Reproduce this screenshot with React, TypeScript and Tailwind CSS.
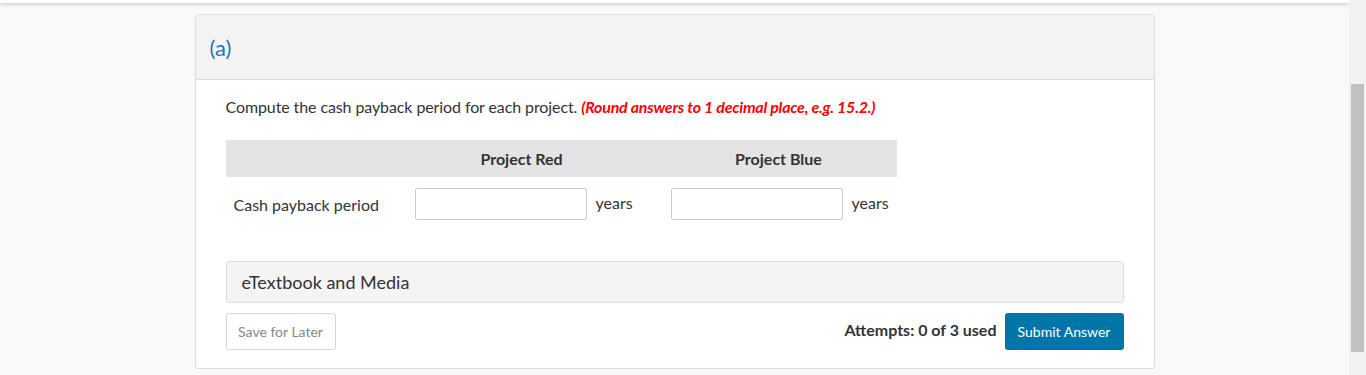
export default function App() {
    return (
        <div className="flex h-[375px] w-full overflow-hidden bg-[#f9f9f9] font-['Lato',sans-serif] text-[#333]">
            <div className="flex flex-1 flex-col">
                <div className="h-[3px] w-full bg-white shadow-[0_1px_4px_rgba(0,0,0,0.25)]"></div>
                <div className="mx-auto mt-[11px] w-[960px] rounded-[3px] border border-[#dcdcdc] bg-white">
                    <div className="flex h-[65px] items-center border-b border-[#dcdcdc] bg-[#f4f4f4] pl-[14px]">
                        <span className="mt-[1px] text-[22px] text-[#1f78b4]">(a)</span>
                    </div>

                    <div className="px-[30px] pb-[18px] pt-[17px]">
                        <p className="text-[16px] leading-[20px] tracking-[-0.1px]">
                            Compute the cash payback period for each project.{" "}
                            <span className="font-bold italic text-[#ff0000] tracking-[-0.25px]">
                                (Round answers to 1 decimal place, e.g. 15.2.)
                            </span>
                        </p>

                        <div className="mt-[23px] w-[671px]">
                            <div className="flex h-[37px] items-center bg-[#e4e4e4] text-[16px] font-bold">
                                <div className="w-[189px]"></div>
                                <div className="w-[214px] text-center">Project Red</div>
                                <div className="w-[42px]"></div>
                                <div className="w-[216px] text-center">Project Blue</div>
                            </div>
                            <div className="mt-[11px] flex items-center text-[16px]">
                                <div className="w-[189px] pl-[8px] pt-[2px]">Cash payback period</div>
                                <div className="flex w-[219px] items-center gap-[9px]">
                                    <input className="h-[32px] w-[172px] rounded-[2px] border border-[#cccccc] bg-white outline-none" />
                                    <span className="-mt-[2px]">years</span>
                                </div>
                                <div className="w-[37px]"></div>
                                <div className="flex w-[219px] items-center gap-[9px]">
                                    <input className="h-[32px] w-[172px] rounded-[2px] border border-[#cccccc] bg-white outline-none" />
                                    <span className="-mt-[2px]">years</span>
                                </div>
                            </div>
                        </div>

                        <div className="mt-[41px] flex h-[42px] items-center rounded-[3px] border border-[#dcdcdc] bg-[#f4f4f4] pl-[15px] text-[18px]">
                            eTextbook and Media
                        </div>

                        <div className="mt-[10px] flex items-center justify-between">
                            <button className="h-[37px] w-[110px] rounded-[3px] border border-[#d6d6d6] bg-white text-[14px] text-[#888]">
                                Save for Later
                            </button>
                            <div className="flex items-center gap-[8px]">
                                <span className="-mt-[3px] text-[16px] font-bold">Attempts: 0 of 3 used</span>
                                <button className="h-[37px] w-[119px] rounded-[3px] bg-[#0076a8] text-[14px] text-white">
                                    Submit Answer
                                </button>
                            </div>
                        </div>
                    </div>
                </div>
            </div>
            <div className="flex w-[17px] flex-col bg-[#f1f1f1] pl-[2px] pr-[2px] pt-[84px]">
                <div className="h-[268px] w-full bg-[#c1c1c1]"></div>
            </div>
        </div>
    );
}
